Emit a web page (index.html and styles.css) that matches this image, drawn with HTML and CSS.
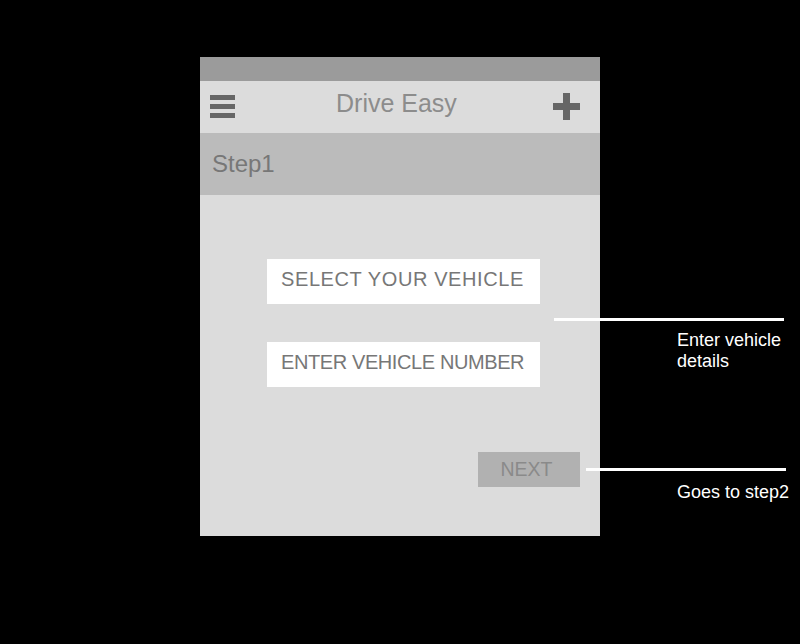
FILE: index.html
```html
<!DOCTYPE html>
<html>
<head>
<meta charset="utf-8">
<link rel="stylesheet" href="styles.css">
</head>
<body>
<div class="stage">
  <div class="phone">
    <div class="statusbar"></div>
    <div class="appbar">
      <div class="hamburger"><span></span><span></span><span></span></div>
      <div class="title">Drive Easy</div>
      <svg class="plus" width="27" height="27" viewBox="0 0 27 27"><rect x="10" y="0" width="7" height="27" fill="#666"/><rect x="0" y="10" width="27" height="7" fill="#666"/></svg>
    </div>
    <div class="stepbar">Step1</div>
    <div class="content">
      <div class="field field-select">SELECT YOUR VEHICLE</div>
      <div class="field field-number">ENTER VEHICLE NUMBER</div>
      <div class="actions"><div class="next">NEXT</div></div>
    </div>
  </div>
  <div class="note note-details">
    <div class="line line1"></div>
    <div class="note-text text1">Enter vehicle<br>details</div>
  </div>
  <div class="note note-next">
    <div class="line line2"></div>
    <div class="note-text text2">Goes to step2</div>
  </div>
</div>
</body>
</html>
```
FILE: styles.css
```css
html, body {
  margin: 0;
  padding: 0;
  background: #000;
  font-family: "Liberation Sans", Arial, sans-serif;
}
.stage {
  position: relative;
  width: 800px;
  height: 644px;
  padding-top: 57px;
  box-sizing: border-box;
}
.phone {
  width: 400px;
  margin-left: 200px;
  display: flex;
  flex-direction: column;
  background: #dcdcdc;
}
.statusbar {
  height: 24px;
  background: #9b9b9b;
}
.appbar {
  height: 52px;
  background: #dcdcdc;
  display: flex;
  align-items: center;
  padding: 0 20px 0 10px;
}
.hamburger {
  width: 25px;
  display: flex;
  flex-direction: column;
  gap: 4px;
  margin-top: -1px;
}
.hamburger span {
  display: block;
  height: 5px;
  background: #666;
}
.title {
  font-size: 25px;
  color: #8c8c8c;
  margin-left: 101px;
  margin-top: -8px;
}
.plus {
  margin-left: auto;
  margin-top: -2px;
}
.stepbar {
  height: 62px;
  background: #bbbbbb;
  color: #777;
  font-size: 24px;
  display: flex;
  align-items: center;
  padding-left: 12px;
  box-sizing: border-box;
}
.content {
  height: 341px;
  display: flex;
  flex-direction: column;
  align-items: center;
  padding-top: 64px;
  padding-left: 7px;
  box-sizing: border-box;
}
.field {
  width: 273px;
  height: 45px;
  background: #fff;
  color: #777;
  font-size: 20px;
  display: flex;
  align-items: center;
  padding-left: 14px;
  margin-bottom: 38px;
  padding-bottom: 5px;
  box-sizing: border-box;
}
.field-select {
  letter-spacing: 0.6px;
}
.field-number {
  letter-spacing: -0.4px;
}
.actions {
  align-self: stretch;
  display: flex;
  justify-content: flex-end;
  padding-right: 20px;
  margin-top: 27px;
}
.next {
  width: 102px;
  height: 35px;
  background: #b1b1b1;
  color: #8a8a8a;
  font-size: 19.5px;
  display: flex;
  align-items: center;
  justify-content: center;
  padding-right: 5px;
  box-sizing: border-box;
}
.note {
  position: absolute;
}
.line {
  height: 3px;
  background: #fff;
}
.note-details {
  left: 554px;
  top: 318px;
}
.line1 {
  width: 230px;
}
.note-next {
  left: 586px;
  top: 468px;
}
.line2 {
  width: 200px;
}
.note-text {
  color: #fff;
  font-size: 18px;
  line-height: 21px;
}
.text1 {
  margin-left: 123px;
  margin-top: 9px;
}
.text2 {
  margin-left: 91px;
  margin-top: 11px;
}
```
